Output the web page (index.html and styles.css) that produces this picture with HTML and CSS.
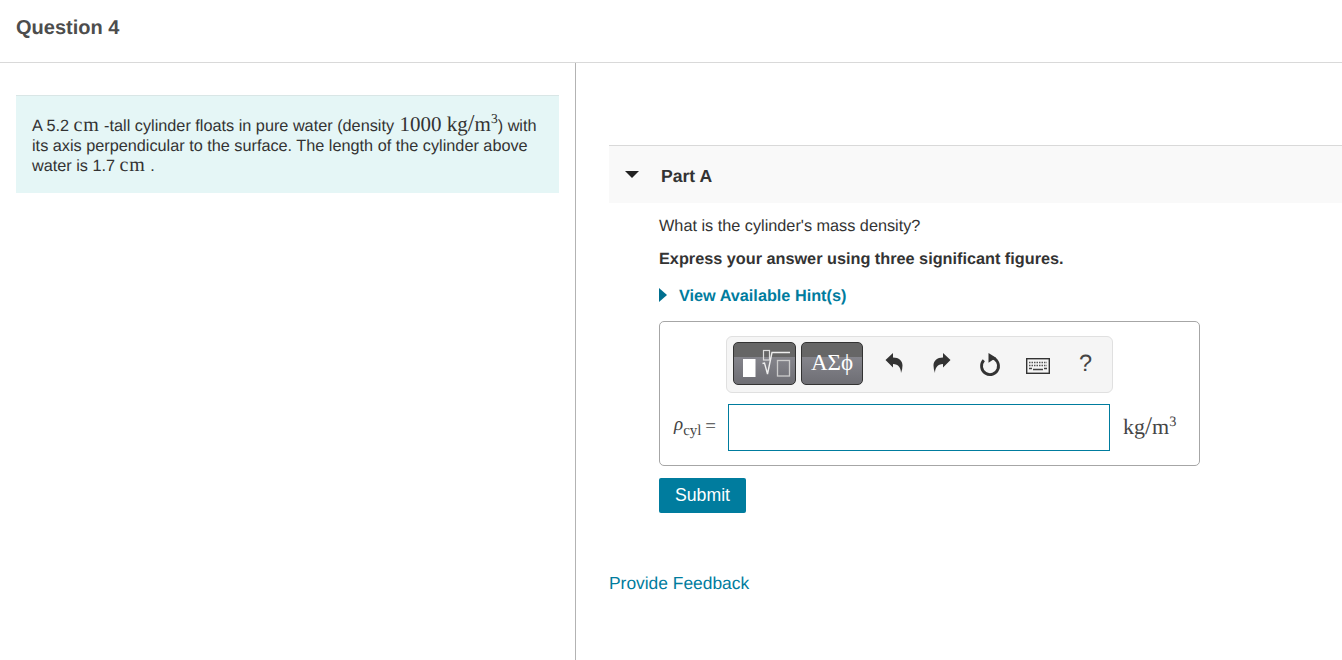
FILE: index.html
```html
<!DOCTYPE html>
<html lang="en">
<head>
  <meta charset="UTF-8">
  <meta name="viewport" content="width=device-width, initial-scale=1.0">
  <title>Question 4</title>
  <link rel="stylesheet" href="styles.css">
</head>
<body>
  <header class="page-header">
    <h1>Question 4</h1>
  </header>

  <div class="columns">
    <div class="left-col">
      <div class="intro">
        <div class="intro-line">A 5.2 <span class="math">cm</span> -tall cylinder floats in pure water (density <span class="math math-big">1000 kg<span class="slash">/</span>m<sup>3</sup></span>) with</div>
        <div class="intro-line">its axis perpendicular to the surface. The length of the cylinder above</div>
        <div class="intro-line">water is 1.7 <span class="math">cm</span> .</div>
      </div>
    </div>

    <div class="right-col">
      <div class="part-head">
        <span class="arrow-down"></span>
        <h2>Part A</h2>
      </div>

      <div class="part-body">
        <p class="question">What is the cylinder's mass density?</p>
        <p class="instruction">Express your answer using three significant figures.</p>
        <div class="hint"><span class="arrow-right"></span><a href="#">View Available Hint(s)</a></div>

        <div class="answer-box">
          <div class="toolbar">
            <button class="tpl-btn tpl-math" type="button" aria-label="Templates">
              <svg width="61" height="41" viewBox="0 0 61 41">
                <rect x="9" y="16" width="12.500" height="18" fill="#fff"/>
                <rect x="29.500" y="7.500" width="6" height="9.500" fill="none" stroke="#ddd" stroke-width="1.200"/>
                <path d="M28.500 20.500l2-.5 3 11 4.500-21.500h18" fill="none" stroke="#eee" stroke-width="1.400"/>
                <rect x="43.500" y="17.500" width="12" height="15.500" fill="none" stroke="#ccc" stroke-width="1.300"/>
              </svg>
            </button>
            <button class="tpl-btn tpl-greek" type="button">ΑΣϕ</button>
            <div class="tools">
              <svg class="tool tool-arrow" width="18" height="22" viewBox="0 0 18 22" aria-label="Undo">
                <path d="M0.500 8L8 1v4.500c6 0 9.500 3.500 9.500 8 0 2.500-.5 5-1.500 7.500 0-5-2.500-9-8-9v3.500z" fill="#333"/>
              </svg>
              <svg class="tool tool-arrow" width="18" height="22" viewBox="0 0 18 22" aria-label="Redo">
                <path d="M17.500 8L10 1v4.500c-6 0-9.500 3.500-9.500 8 0 2.500.5 5 1.500 7.500 0-5 2.500-9 8-9v3.500z" fill="#333"/>
              </svg>
              <svg class="tool" width="22" height="24" viewBox="0 0 22 24" aria-label="Reset">
                <path d="M4.800 7.300A8.500 8.500 0 1 0 12.500 4.700" fill="none" stroke="#333" stroke-width="2.800"/>
                <path d="M9.500 0l7.500 4.800-7.500 5z" fill="#333"/>
              </svg>
              <svg class="tool tool-keys" width="24" height="16" viewBox="0 0 24 16" aria-label="Keyboard">
                <rect x="0.700" y="0.700" width="22.600" height="14.600" fill="#f5f5f5" stroke="#333" stroke-width="1.400"/>
                <path d="M3 4.500h18M3 7.500h18" stroke="#555" stroke-width="1.500" stroke-dasharray="1.500 1"/>
                <path d="M3 10.500h3M7 11.500h10M18 10.500h3" stroke="#444" stroke-width="1.500"/>
              </svg>
              <span class="help">?</span>
            </div>
          </div>

          <div class="answer-row">
            <span class="var-label"><i>ρ</i><sub>cyl</sub> <span class="equals">=</span></span>
            <input class="answer-input" type="text" aria-label="Answer">
            <span class="units">kg<span class="slash">/</span>m<sup>3</sup></span>
          </div>
        </div>

        <button class="submit" type="button">Submit</button>
      </div>

      <a class="feedback" href="#">Provide Feedback</a>
    </div>
  </div>
</body>
</html>
```

FILE: styles.css
```css
html, body {
  height: 100%;
}
body {
  margin: 0;
  overflow: hidden;
  display: flex;
  flex-direction: column;
  background-color: #fff;
  color: #333;
  font-family: "Liberation Sans", Arial, sans-serif;
  font-size: 16.25px;
  text-rendering: geometricPrecision;
}
a {
  color: #007c9e;
  text-decoration: none;
}
.page-header {
  height: 62px;
  flex-shrink: 0;
  border-bottom: 1px solid #d9d9d9;
  padding-left: 16px;
}
h1 {
  margin: 0;
  padding-top: 16px;
  font-size: 20px;
  line-height: 24px;
  font-weight: bold;
  color: #4d4d4d;
}
.columns {
  flex: 1;
  display: flex;
}
.left-col {
  width: 543px;
  padding: 32px 16px 0;
  border-right: 1px solid #b3b3b3;
}
.intro {
  height: 98px;
  box-sizing: border-box;
  padding: 20px 16px 0;
  background-color: #e5f6f6;
  border-top: 1px solid #d9e6e6;
}
.intro-line {
  height: 20px;
  line-height: 20px;
}
.math {
  font-family: "Liberation Serif", "Times New Roman", serif;
  font-size: 20px;
  letter-spacing: 0.8px;
  line-height: 0;
}
.math-big {
  margin-left: 1px;
  font-size: 21px;
  letter-spacing: 0;
}
.slash {
  font-size: 1.15em;
}
sup {
  font-size: 0.65em;
  line-height: 0;
}
.right-col {
  flex: 1;
  padding: 82px 0 0 33px;
}
.part-head {
  height: 57px;
  display: flex;
  align-items: center;
  background-color: #f9f9f9;
  border-top: 1px solid #d9d9d9;
}
.arrow-down {
  width: 0;
  height: 0;
  margin: 0 22px 0 16px;
  border-top: 7px solid #222;
  border-left: 7px solid transparent;
  border-right: 7px solid transparent;
}
h2 {
  margin: 0;
  padding-top: 4px;
  font-size: 17.6px;
  font-weight: bold;
  color: #333;
}
.part-body {
  padding: 12px 0 0 50px;
}
.question, .instruction {
  margin: 0;
  line-height: 22px;
}
.instruction {
  margin-top: 11px;
  font-weight: bold;
}
.hint {
  display: flex;
  align-items: center;
  margin-top: 15px;
  height: 22px;
  font-weight: bold;
}
.arrow-right {
  width: 0;
  height: 0;
  margin: 0 12px 3px 0;
  border-left: 8px solid #006f8f;
  border-top: 7px solid transparent;
  border-bottom: 7px solid transparent;
}
.answer-box {
  margin-top: 14px;
  padding-top: 14px;
  box-sizing: border-box;
  width: 541px;
  height: 145px;
  border: 1px solid #a6a6a6;
  border-radius: 5px;
}
.toolbar {
  margin-left: 66px;
  display: flex;
  align-items: center;
  padding-left: 6px;
  box-sizing: border-box;
  width: 387px;
  height: 57px;
  background-color: #f5f5f5;
  border: 1px solid #e0e0e0;
  border-radius: 6px;
}
.tpl-btn {
  height: 43px;
  margin-bottom: 2px;
  padding: 0;
  border: 1px solid #333;
  border-radius: 5px;
  background: linear-gradient(#666 0, #666 33%, #85858c 34%, #6e6e74 100%);
  color: #fff;
}
.tpl-math {
  width: 63px;
  margin-right: 5px;
}
.tpl-math svg {
  display: block;
}
.tpl-greek {
  width: 62px;
  padding-bottom: 2px;
  font-family: "Liberation Serif", serif;
  font-size: 23px;
  line-height: 38px;
}
.tools {
  display: flex;
  align-items: center;
  margin-left: 22px;
}
.tool {
  display: block;
}
.tool-arrow {
  margin-bottom: 3px;
}
.tool-keys {
  margin-top: 3px;
}
.tool + .tool {
  margin-left: 30px;
}
.tool + .tool + .tool {
  margin-left: 28px;
}
.tool + .tool + .tool + .tool {
  margin-left: 25px;
}
.help {
  margin: 0 0 2px 29px;
  font-size: 23.5px;
  color: #444;
}
.answer-row {
  display: flex;
  align-items: center;
  margin-top: 11px;
}
.var-label {
  width: 68px;
  box-sizing: border-box;
  padding: 0 0 5px 14px;
  font-family: "Liberation Serif", serif;
  font-size: 19px;
  color: #444;
  white-space: nowrap;
}
.var-label sub {
  font-size: 15px;
  line-height: 0;
}
.equals {
  margin-left: -1px;
  vertical-align: -2px;
  line-height: 0;
}
.answer-input {
  width: 382px;
  height: 47px;
  box-sizing: border-box;
  border: 1px solid #007c9e;
  padding: 0 8px;
  outline: none;
}
.units {
  margin-left: 13px;
  padding-bottom: 2px;
  font-family: "Liberation Serif", serif;
  font-size: 22px;
  color: #444;
}
.submit {
  display: block;
  margin-top: 12px;
  width: 87px;
  height: 35px;
  padding: 0;
  border: none;
  border-radius: 2px;
  background-color: #007c9e;
  color: #fff;
  font-family: inherit;
  font-size: 17.7px;
}
.feedback {
  display: inline-block;
  margin-top: 59px;
  font-size: 17.4px;
  line-height: 22px;
}
```
